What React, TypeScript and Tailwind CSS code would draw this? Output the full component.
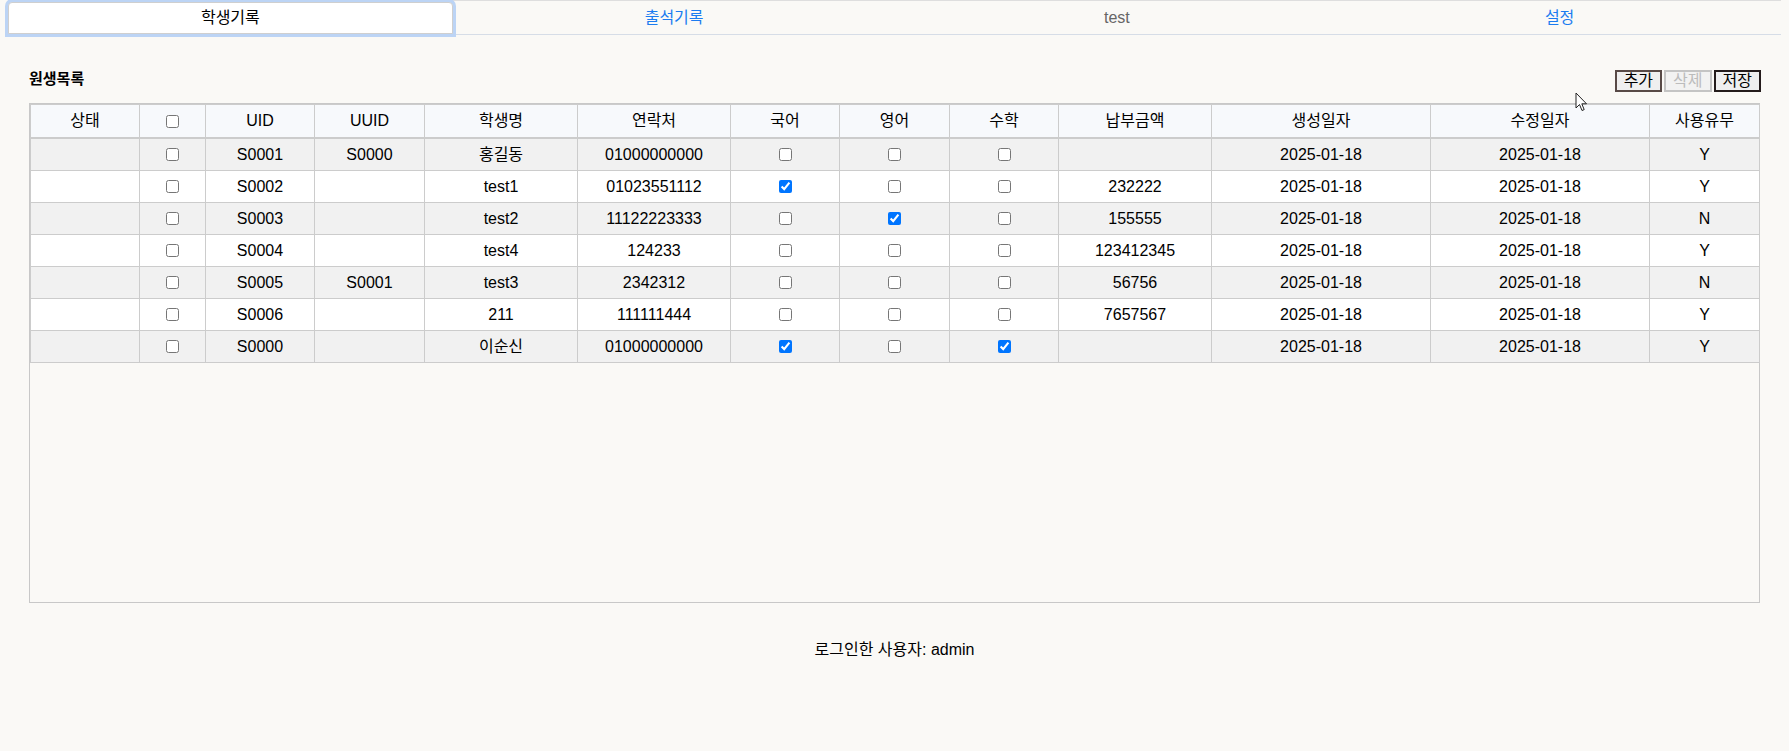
import React from "react";

type Row = {
  uid: string;
  uuid: string;
  name: string;
  phone: string;
  kor: boolean;
  eng: boolean;
  math: boolean;
  fee: string;
  use: string;
};

const rows: Row[] = [
  { uid: "S0001", uuid: "S0000", name: "홍길동", phone: "01000000000", kor: false, eng: false, math: false, fee: "", use: "Y" },
  { uid: "S0002", uuid: "", name: "test1", phone: "01023551112", kor: true, eng: false, math: false, fee: "232222", use: "Y" },
  { uid: "S0003", uuid: "", name: "test2", phone: "11122223333", kor: false, eng: true, math: false, fee: "155555", use: "N" },
  { uid: "S0004", uuid: "", name: "test4", phone: "124233", kor: false, eng: false, math: false, fee: "123412345", use: "Y" },
  { uid: "S0005", uuid: "S0001", name: "test3", phone: "2342312", kor: false, eng: false, math: false, fee: "56756", use: "N" },
  { uid: "S0006", uuid: "", name: "211", phone: "111111444", kor: false, eng: false, math: false, fee: "7657567", use: "Y" },
  { uid: "S0000", uuid: "", name: "이순신", phone: "01000000000", kor: true, eng: false, math: true, fee: "", use: "Y" },
];

const headers = ["상태", "", "UID", "UUID", "학생명", "연락처", "국어", "영어", "수학", "납부금액", "생성일자", "수정일자", "사용유무"];

function Cb({ checked }: { checked: boolean }) {
  return (
    <input
      type="checkbox"
      checked={checked}
      readOnly
      className="m-0 mx-auto block w-[13px] h-[13px] accent-[#0075ff]"
    />
  );
}

function Td({ children }: { children?: React.ReactNode }) {
  return (
    <td className="h-[32px] p-0 text-center align-middle border-b border-r border-[#cccccc]">
      {children}
    </td>
  );
}

export default function App() {
  return (
    <div className="relative min-h-[751px] bg-[#faf9f6] text-black font-['Liberation_Sans','Noto_Sans_CJK_KR',sans-serif] text-[16px]">
      {/* Tab bar */}
      <div className="mx-[8px] flex h-[35px] border-t border-b border-t-[#dedede] border-b-[#d6dde7]">
        <div className="flex-1 mt-[1px] h-[32px] flex items-center justify-center bg-white border border-[#cfcfcf] rounded-t-[4px] ring-[3px] ring-[#bcd4f5] text-black">
          학생기록
        </div>
        <div className="flex-1 flex items-center justify-center text-[#1b7cf0]">출석기록</div>
        <div className="flex-1 flex items-center justify-center text-[#666666]">test</div>
        <div className="flex-1 flex items-center justify-center text-[#1b7cf0]">설정</div>
      </div>

      {/* Content */}
      <div className="px-[29px]">
        <div className="mt-[34px] flex items-start justify-between">
          <div className="h-[20px] leading-[20px] text-[15px] font-bold">원생목록</div>
          <div className="mt-[1px] flex gap-[2px] mr-[-1px]">
            <button className="h-[22px] px-[7px] leading-none text-[16px] bg-[#efefef] border-2 border-[#584a47] text-black">추가</button>
            <button className="h-[22px] px-[7px] leading-none text-[16px] bg-[#f2f2f2] border-2 border-[#c4c4c4] text-[#bcbcbc]">삭제</button>
            <button className="h-[22px] px-[7px] leading-none text-[16px] bg-[#efefef] border-2 border-[#241c1c] text-black">저장</button>
          </div>
        </div>

        <div className="mt-[11px] h-[500px] border border-[#c8c8c8]">
          <table className="w-full table-fixed border-separate border-spacing-0 border-l border-t border-[#cccccc]">
            <colgroup>
              <col className="w-[109px]" />
              <col className="w-[66px]" />
              <col className="w-[109px]" />
              <col className="w-[110px]" />
              <col className="w-[153px]" />
              <col className="w-[153px]" />
              <col className="w-[109px]" />
              <col className="w-[110px]" />
              <col className="w-[109px]" />
              <col className="w-[153px]" />
              <col className="w-[219px]" />
              <col className="w-[219px]" />
              <col className="w-[110px]" />
            </colgroup>
            <thead>
              <tr className="bg-[#f7f9fc]">
                {headers.map((h, i) => (
                  <th
                    key={i}
                    className="h-[34px] p-0 font-normal text-center align-middle border-r border-b-2 border-[#cccccc]"
                  >
                    {i === 1 ? <Cb checked={false} /> : h}
                  </th>
                ))}
              </tr>
            </thead>
            <tbody>
              {rows.map((r, i) => (
                <tr key={i} className={i % 2 === 0 ? "bg-[#f1f1f1]" : "bg-white"}>
                  <Td></Td>
                  <Td><Cb checked={false} /></Td>
                  <Td>{r.uid}</Td>
                  <Td>{r.uuid}</Td>
                  <Td>{r.name}</Td>
                  <Td>{r.phone}</Td>
                  <Td><Cb checked={r.kor} /></Td>
                  <Td><Cb checked={r.eng} /></Td>
                  <Td><Cb checked={r.math} /></Td>
                  <Td>{r.fee}</Td>
                  <Td>2025-01-18</Td>
                  <Td>2025-01-18</Td>
                  <Td>{r.use}</Td>
                </tr>
              ))}
            </tbody>
          </table>
        </div>

        <div className="mt-[35px] text-center leading-[24px]">로그인한 사용자: admin</div>
      </div>

      {/* mouse cursor overlay */}
      <svg
        className="absolute left-[1575px] top-[92px]"
        width="13"
        height="21"
        viewBox="0 0 13 21"
      >
        <path
          d="M1 1 L1 16 L4.5 12.5 L7 18.5 L9.2 17.6 L6.8 11.8 L11.5 11.8 Z"
          fill="#ffffff"
          stroke="#222222"
          strokeWidth="1"
          strokeLinejoin="round"
        />
      </svg>
    </div>
  );
}
